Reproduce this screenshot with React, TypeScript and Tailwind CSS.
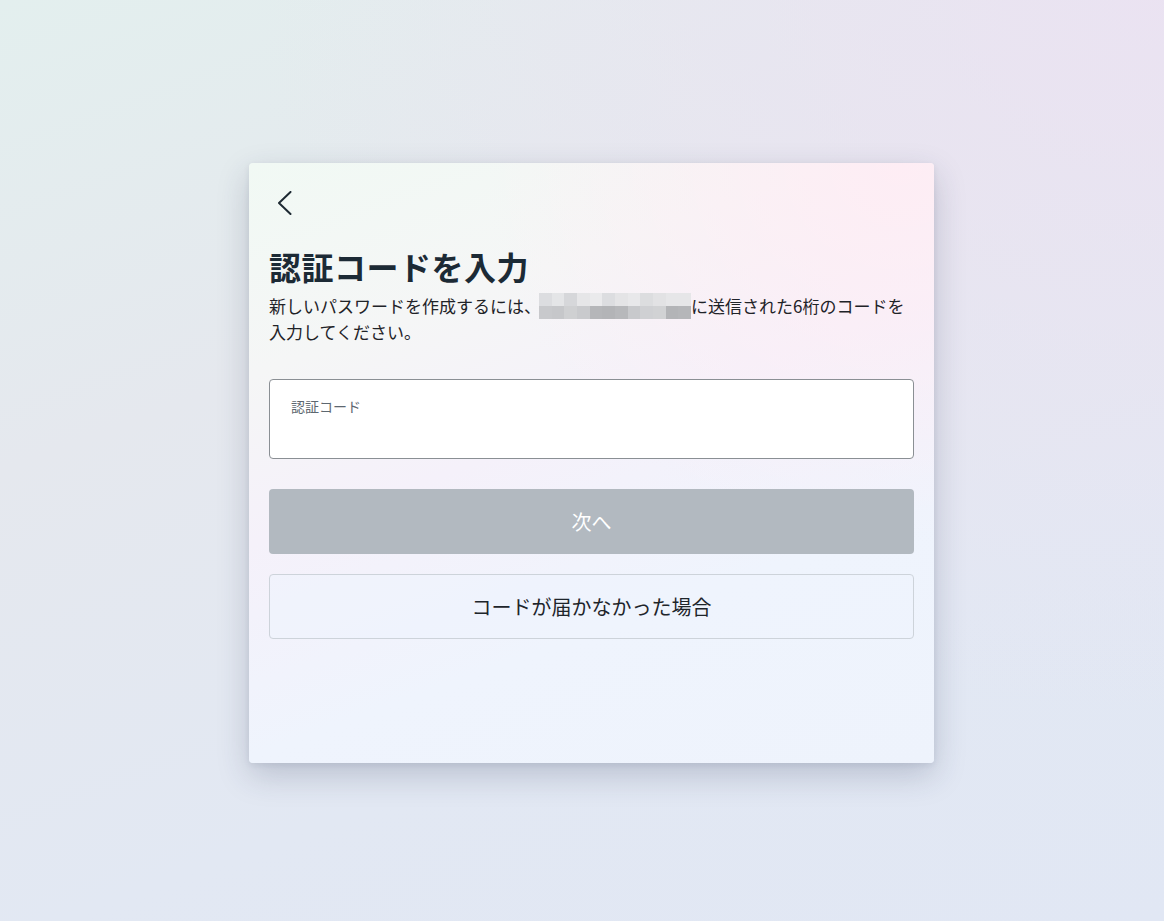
import React from "react";

const row1 = ["#dcdde0", "#e4e5e7", "#d6d7da", "#e6e6e8", "#eaeaec", "#dcdde0", "#e4e4e6", "#e8e8ea", "#dcdddf", "#e2e2e4", "#e6e6e8", "#e6e6e8"];
const row2 = ["#c8c9cc", "#c6c7ca", "#cfd0d2", "#c9cacd", "#b5b6b9", "#b3b4b7", "#b7b8bb", "#c8c9cc", "#cfd0d3", "#d1d2d4", "#b3b4b7", "#b5b6b9"];

function Pixelated() {
  return (
    <span className="inline-block w-[152px] h-[26px] align-top -ml-[2px]">
      <span className="grid grid-cols-12 grid-rows-2 w-full h-full">
        {row1.map((c, i) => (
          <span key={"a" + i} style={{ backgroundColor: c }} />
        ))}
        {row2.map((c, i) => (
          <span key={"b" + i} style={{ backgroundColor: c }} />
        ))}
      </span>
    </span>
  );
}

export default function App() {
  return (
    <div
      className="w-[1164px] h-[921px] relative overflow-hidden bg-[linear-gradient(160deg,#e3efee_0%,#e5e8ee_35%,#e2e8f3_70%,#e1e7f4_100%)] font-['Noto_Sans_CJK_JP','Noto_Sans',sans-serif]"
    >
      <div className="absolute inset-0 bg-[radial-gradient(ellipse_at_100%_0%,rgba(235,226,242,0.9)_0%,rgba(235,226,242,0)_55%)]" />
      <div className="relative flex pl-[249px] pt-[163px]">
        <div className="w-[685px] h-[600px] rounded-[4px] shadow-[0_12px_32px_rgba(40,50,80,0.22),0_2px_6px_rgba(40,50,80,0.08)] overflow-hidden relative bg-[linear-gradient(160deg,#f1f9f4_0%,#f5f6f6_25%,#f5f1fa_45%,#eff4fd_70%,#eef3fc_100%)]">
          <div className="absolute inset-0 bg-[radial-gradient(ellipse_at_95%_0%,rgba(255,236,244,0.9)_0%,rgba(255,236,244,0)_45%)]" />
          <div className="relative px-5 pt-[28px]">
            <button className="w-[24px] h-[24px] ml-[5px] flex items-center justify-center">
              <svg width="24" height="24" viewBox="0 0 24 24" fill="none">
                <path d="M16.5 1 L5 12 L16.5 23" stroke="#1e2a33" strokeWidth="2" strokeLinecap="round" strokeLinejoin="round" />
              </svg>
            </button>
            <h1 className="mt-[31px] text-[32px] leading-[40px] font-bold text-[#1c2a35] tracking-[0.5px]">
              認証コードを入力
            </h1>
            <p className="mt-[7px] text-[17px] leading-[26px] text-[#1f2328]">
              新しいパスワードを作成するには、<Pixelated />に送信された6桁のコードを入力してください。
            </p>
            <div className="mt-[34px] h-[80px] rounded-[4px] border border-[#8a8f94] bg-white px-[21px] pt-[16px]">
              <div className="text-[14px] leading-[20px] text-[#5d6770]">認証コード</div>
            </div>
            <button className="mt-[30px] w-full h-[65px] rounded-[4px] bg-[#b2b9c0] text-white text-[20px] flex items-center justify-center">
              次へ
            </button>
            <button className="mt-[20px] w-full h-[65px] rounded-[4px] border border-[#cdd3da] bg-[#eef4fd]/60 text-[#1e252b] text-[20px] flex items-center justify-center">
              コードが届かなかった場合
            </button>
          </div>
        </div>
      </div>
    </div>
  );
}
